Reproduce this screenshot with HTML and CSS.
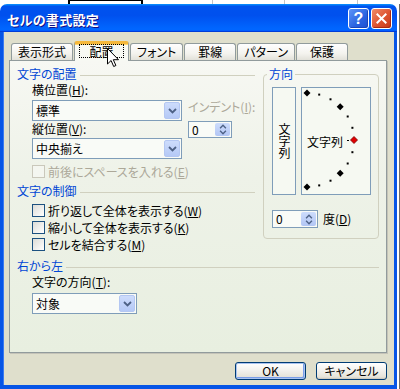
FILE: index.html
```html
<!DOCTYPE html>
<html lang="ja">
<head>
    <meta charset="UTF-8">
    <meta name="viewport" content="width=device-width, initial-scale=1.0">
    <title>セルの書式設定</title>
    <link rel="stylesheet" href="styles.css">
</head>
<body>
    <div class="sheet-top">
        <span class="cell c1"></span>
        <span class="cell sel"></span>
        <span class="cell c3"></span>
        <span class="cell c4"></span>
        <span class="cell c5"></span>
        <span class="cell c6"></span>
    </div>

    <div class="desk">
        <div class="dialog">
            <header class="titlebar">
                <span class="title">セルの書式設定</span>
                <span class="caption-btns">
                    <button class="cap help" aria-label="ヘルプ">?</button>
                    <button class="cap close" aria-label="閉じる">
                        <svg viewBox="0 0 21 21"><path d="M6 6l9 9M15 6l-9 9" stroke="#fff" stroke-width="2.2" stroke-linecap="square"/></svg>
                    </button>
                </span>
            </header>

            <div class="dlg-body">
                <div class="tabs">
                    <span class="tab first">表示形式</span>
                    <span class="tab active"><span class="focus">配置</span></span>
                    <span class="tab">フォント</span>
                    <span class="tab">罫線</span>
                    <span class="tab">パターン</span>
                    <span class="tab">保護</span>
                    <svg class="cursor" viewBox="0 0 13 20"><path d="M.5.5v15.5l3.6-3.5 2.6 6 2.2-1-2.6-5.8h5.2z" fill="#fff" stroke="#000" stroke-width="1"/></svg>
                </div>

                <div class="panel">
                    <div class="top">
                        <div class="left">
                            <div class="group-title">文字の配置</div>
                            <div class="align-grid">
                                <div class="align-col">
                                    <div class="label">横位置(<u>H</u>):</div>
                                    <div class="combo first-combo">
                                        <span class="combo-text">標準</span>
                                        <span class="drop"><svg viewBox="0 0 9 6"><path d="M1 1l3.5 3.5L8 1" fill="none" stroke="#4d6185" stroke-width="1.8"/></svg></span>
                                    </div>
                                    <div class="label">縦位置(<u>V</u>):</div>
                                    <div class="combo second-combo">
                                        <span class="combo-text">中央揃え</span>
                                        <span class="drop"><svg viewBox="0 0 9 6"><path d="M1 1l3.5 3.5L8 1" fill="none" stroke="#4d6185" stroke-width="1.8"/></svg></span>
                                    </div>
                                </div>
                                <div class="indent-col">
                                    <div class="label disabled">インデント(<u>I</u>):</div>
                                    <div class="spin">
                                        <span class="spin-text">0</span>
                                        <span class="spin-btn">
                                            <svg viewBox="0 0 9 6"><path d="M1 5l3.5-3.5L8 5" fill="none" stroke="#4d6185" stroke-width="1.6"/></svg>
                                            <svg viewBox="0 0 9 6"><path d="M1 1l3.5 3.5L8 1" fill="none" stroke="#4d6185" stroke-width="1.6"/></svg>
                                        </span>
                                    </div>
                                </div>
                            </div>
                            <div class="check disabled space-check"><span class="box"></span>前後にスペースを入れる(<u>E</u>)</div>

                            <div class="group-title control-title">文字の制御</div>
                            <div class="checks">
                                <div class="check"><span class="box"></span>折り返して全体を表示する(<u>W</u>)</div>
                                <div class="check"><span class="box"></span>縮小して全体を表示する(<u>K</u>)</div>
                                <div class="check"><span class="box"></span>セルを結合する(<u>M</u>)</div>
                            </div>
                        </div>

                        <fieldset class="orient">
                            <legend>方向</legend>
                            <div class="orient-boxes">
                                <div class="vbox"><span class="vtext">文字列</span></div>
                                <div class="hbox">
                                    <span class="htext">文字列</span>
                                    <svg class="dial" viewBox="0 0 68 106">
                                        <polygon points="5,1.5 8.5,5 5,8.5 1.5,5"/>
                                        <rect x="16.2" y="5.6" width="2" height="2"/>
                                        <rect x="27.5" y="10.3" width="2" height="2"/>
                                        <polygon points="38.2,15.3 41.7,18.8 38.2,22.3 34.7,18.8"/>
                                        <rect x="44.7" y="27.5" width="2" height="2"/>
                                        <rect x="49.4" y="38.8" width="2" height="2"/>
                                        <rect x="45" y="52" width="2" height="1"/>
                                        <polygon points="52,48.5 55.5,52 52,55.5 48.5,52" fill="#e00000" stroke="#700" stroke-width=".8"/>
                                        <rect x="49.4" y="63.2" width="2" height="2"/>
                                        <rect x="44.7" y="74.5" width="2" height="2"/>
                                        <polygon points="38.2,81.7 41.7,85.2 38.2,88.7 34.7,85.2"/>
                                        <rect x="27.5" y="91.7" width="2" height="2"/>
                                        <rect x="16.2" y="96.4" width="2" height="2"/>
                                        <polygon points="5,95.5 8.5,99 5,102.5 1.5,99"/>
                                    </svg>
                                </div>
                            </div>
                            <div class="degree-row">
                                <div class="spin degree-spin">
                                    <span class="spin-text">0</span>
                                    <span class="spin-btn">
                                        <svg viewBox="0 0 9 6"><path d="M1 5l3.5-3.5L8 5" fill="none" stroke="#4d6185" stroke-width="1.6"/></svg>
                                        <svg viewBox="0 0 9 6"><path d="M1 1l3.5 3.5L8 1" fill="none" stroke="#4d6185" stroke-width="1.6"/></svg>
                                    </span>
                                </div>
                                <span class="degree-label">度(<u>D</u>)</span>
                            </div>
                        </fieldset>
                    </div>

                    <div class="group-title rtl-title">右から左</div>
                    <div class="rtl-body">
                        <div class="label">文字の方向(<u>T</u>):</div>
                        <div class="combo dir-combo">
                            <span class="combo-text">対象</span>
                            <span class="drop"><svg viewBox="0 0 9 6"><path d="M1 1l3.5 3.5L8 1" fill="none" stroke="#4d6185" stroke-width="1.8"/></svg></span>
                        </div>
                    </div>
                </div>

                <div class="buttons">
                    <button class="btn default">OK</button>
                    <button class="btn">キャンセル</button>
                </div>
            </div>
        </div>
        <div class="sheet-right"></div>
    </div>
</body>
</html>
```

FILE: styles.css
```css
*{margin:0;padding:0;box-sizing:border-box}
body{width:400px;height:389px;overflow:hidden;background:#fff;font-family:"Noto Sans CJK JP","Noto Sans",sans-serif;font-size:12px;line-height:16px;color:#000;font-feature-settings:"palt"}
u{text-decoration:underline;text-underline-offset:1px}
button{font:inherit;font-feature-settings:"palt";color:inherit}

/* spreadsheet behind the dialog */
.sheet-top{display:flex;height:4px}
.cell{height:4px;border-right:1px solid #c4c4c4}
.cell.c1{width:68px;border-right:none}
.cell.sel{width:75px;border:2px solid #000;border-bottom:none;border-top-width:1px}
.cell.c3{width:70px}
.cell.c4{width:72px}
.cell.c5{width:73px}
.cell.c6{flex:1;border-right:none}
.sheet-right{width:3px;border-left:1px solid #fff;border-right:1px solid #6b6b6b;height:385px}

.desk{display:flex}
.dialog{width:397px;height:385px;display:flex;flex-direction:column}

/* title bar */
.titlebar{height:28px;display:flex;justify-content:space-between;align-items:center;padding:0 5px 0 7px;border-radius:7px 7px 0 0;background:linear-gradient(180deg,#0997ff,#0053ee 8%,#0050ee 40%,#06f 88%,#06f 93%,#005bff 95%,#003dd7 96%,#003dd7)}
.title{color:#fff;font-weight:700;font-size:13px;line-height:16px;margin-top:3px;text-shadow:1px 1px #0f1089;letter-spacing:.3px}
.caption-btns{display:flex;gap:2px;margin-top:1px}
.cap{width:21px;height:21px;border:1px solid #fff;border-radius:3px;display:flex;align-items:center;justify-content:center;color:#fff;font-family:"Liberation Sans",sans-serif;font-weight:700;font-size:16px;line-height:1}
.cap.help{background:linear-gradient(135deg,#5d94f8,#2a63e0 60%,#1b4fd2);box-shadow:inset -1px -1px #1b45b8}
.cap.close{background:linear-gradient(135deg,#f08c6a,#dd5330 55%,#c2381a);box-shadow:inset -1px -1px #a82a12}
.cap svg{width:21px;height:21px;display:block}

/* window body */
.dlg-body{flex:1;display:flex;flex-direction:column;background:#dfdfcc;border:3px solid #0655e6;border-top:none;border-bottom-width:4px;box-shadow:inset 1px 0 #3a7af0;padding:9px 7px 0 6px}

.tabs{position:relative;height:19px;display:flex;align-items:flex-end;gap:1px;padding-left:2px}
.tab{height:17px;min-width:52px;padding:0 6px;text-align:center;line-height:15px;border:1px solid #919b9c;border-bottom:none;border-radius:3px 3px 0 0;background:linear-gradient(#fefefe,#f4f3ee 60%,#e2e1d9)}
.tab.first{min-width:62px}
.tab.active{position:relative;z-index:1;height:20px;min-width:55px;margin-bottom:-1px;padding:0 3px;border-top:3px solid #f5b83b;background:#f7f9f3;box-shadow:inset 0 1px #ffd56a}
.focus{display:block;height:14px;line-height:13px;border:1px dotted #000;margin:0 1px}
.cursor{position:absolute;left:98px;top:7px;width:13px;height:20px;z-index:2}

.panel{height:293px;border:1px solid #919b9c;background:linear-gradient(#f7f8f3,#eef2e8 40%,#e8efe0);padding:6px 7px 0;box-shadow:1px 1px #c4c3b8}

.top{display:grid;grid-template-columns:238px 116px;column-gap:8px;align-items:start}

.group-title{display:flex;align-items:center;height:14px;line-height:14px;color:#0046d5}
.group-title::after{content:'';flex:1;margin:2px 0 0 3px;border-top:1px solid #d0d0bf}
.control-title{margin-top:4px}
.rtl-title{margin-top:6px}

.label{height:16px;line-height:16px;white-space:nowrap}
.disabled{color:#aca899}

.align-grid{display:grid;grid-template-columns:150px auto;column-gap:6px;margin-top:1px;padding-left:15px}
.first-combo{margin-top:2px}
.second-combo{margin-top:1px}
.indent-col .label{margin-top:17px}
.indent-col .spin{margin-top:6px}

.combo{height:21px;display:flex;align-items:stretch;border:1px solid #7f9db9;background:#f9fbf7}
.combo-text{flex:1;padding-left:3px;line-height:19px}
.drop{width:16px;margin:1px;border:1px solid #b4c7f2;border-radius:2px;background:linear-gradient(#cddcfc,#b5c9f6);display:flex;align-items:center;justify-content:center}
.drop svg{width:9px;height:6px}

.spin{width:44px;height:17px;display:flex;border:1px solid #7f9db9;background:#f9fbf7}
.spin-text{flex:1;padding-left:3px;line-height:15px}
.spin-btn{width:15px;margin:1px;border-radius:2px;background:linear-gradient(#cddcfc,#b2c6f5);display:flex;flex-direction:column;align-items:center;justify-content:center;gap:1px}
.spin-btn svg{width:8px;height:5px}

.check{height:17px;display:flex;align-items:center;white-space:nowrap}
.check .box{width:13px;height:13px;margin-right:3px;border:1px solid #1c5180;background:linear-gradient(135deg,#dcdcd7,#fff)}
.check.disabled .box{border-color:#cac8bb;background:#f4f6f0}
.space-check{margin:4px 0 0 15px}
.checks{margin-top:4px;padding-left:15px}

/* direction group */
.orient{border:1px solid #d0d0bf;border-radius:4px;padding:6px 6px 10px 8px;min-width:0}
.orient legend{color:#0046d5;line-height:14px;padding:0 2px;margin-left:-5px}
.orient-boxes{display:flex;gap:5px}
.vbox{width:24px;height:108px;border:1px solid #7f9db9;background:#f6f9f2;display:flex;align-items:center;justify-content:center}
.vtext{writing-mode:vertical-rl;line-height:12px;letter-spacing:0}
.hbox{position:relative;width:70px;height:108px;border:1px solid #7f9db9;background:#f6f9f2;display:flex;align-items:center;padding-left:5px}
.htext{line-height:14px;margin-top:1px}
.dial{position:absolute;left:0;top:0;width:68px;height:106px}

.degree-row{display:flex;align-items:center;height:18px;margin-top:15px}
.degree-spin{width:46px;height:18px}
.degree-spin .spin-text{line-height:16px}
.degree-label{margin-left:5px}

.rtl-body{padding-left:15px}
.rtl-body .label{margin-top:1px}
.dir-combo{width:105px;margin-top:3px}

/* bottom buttons */
.buttons{display:flex;justify-content:flex-end;gap:10px;margin-top:9px}
.btn{width:71px;height:18px;line-height:16px;border:1px solid #003c74;border-radius:3px;background:linear-gradient(#fff,#f3f2ee 45%,#e6e4da 85%,#d6d0c5);text-align:center;box-shadow:inset 0 -1px #d0ccc0}
.btn.default{box-shadow:inset 0 0 0 1px #a9c3f0,inset -1px -1px 0 1px #7b9ee8}
```
